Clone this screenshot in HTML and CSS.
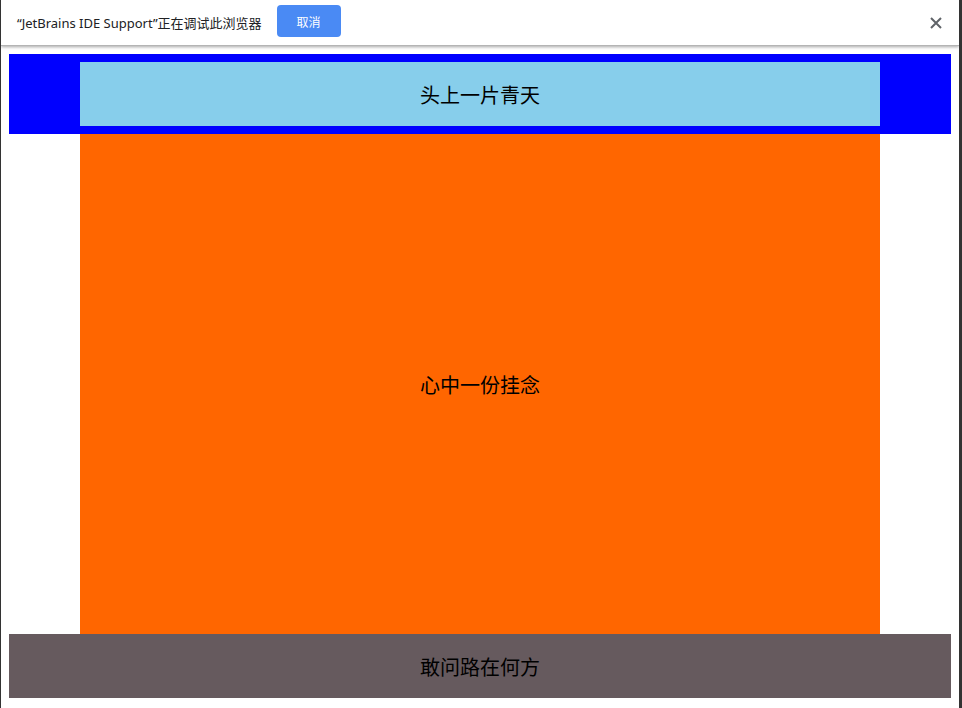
FILE: index.html
```html
<!DOCTYPE html>
<html lang="zh">
<head>
<meta charset="utf-8">
<title>布局</title>
<link rel="stylesheet" href="styles.css">
</head>
<body>
<div class="frame">
  <div class="infobar">
    <span class="info-text">“JetBrains IDE Support”正在调试此浏览器</span>
    <button class="cancel">取消</button>
    <span class="spacer"></span>
    <svg class="close" width="12" height="12" viewBox="0 0 12 12"><path d="M1 1L11 11M11 1L1 11" stroke="#5f6368" stroke-width="2"/></svg>
  </div>
  <div class="viewport">
    <header class="top"><div class="sky">头上一片青天</div></header>
    <main class="middle">心中一份挂念</main>
    <footer class="bottom">敢问路在何方</footer>
  </div>
</div>
</body>
</html>
```
FILE: styles.css
```css
html, body {
  margin: 0;
  padding: 0;
  background: #fff;
}
.frame {
  width: 962px;
  height: 708px;
  box-sizing: border-box;
  border-left: 1px solid #333;
  border-right: 3px solid #333;
  display: flex;
  flex-direction: column;
  overflow: hidden;
}
.infobar {
  height: 45px;
  flex: none;
  display: flex;
  align-items: center;
  padding: 0 17px 0 16px;
  background: #fff;
  border-bottom: 1px solid #b4b4b4;
  box-shadow: 0 1px 3px rgba(0,0,0,0.35);
  position: relative;
  z-index: 2;
  font-family: "Noto Sans", "Noto Sans CJK SC", sans-serif;
  font-size: 13px;
  color: #202124;
}
.info-text {
  white-space: nowrap;
}
.cancel {
  margin-left: 15px;
  margin-bottom: 3px;
  width: 64px;
  height: 32px;
  border: none;
  border-radius: 4px;
  background: #4a8af4;
  color: #fff;
  font-family: "Noto Sans CJK SC", sans-serif;
  font-size: 12px;
  padding: 0;
}
.spacer { flex: 1; }
.close { display: block; }
.viewport {
  flex: 1;
  padding: 8px;
  font-family: "Noto Sans CJK SC", sans-serif;
  font-size: 20px;
  color: #000;
}
.top {
  height: 80px;
  background: #0000ff;
  padding: 8px 0;
  box-sizing: border-box;
}
.sky {
  width: 800px;
  height: 64px;
  margin: 0 auto;
  background: #87ceeb;
  display: flex;
  align-items: center;
  justify-content: center;
}
.middle {
  width: 800px;
  height: 500px;
  margin: 0 auto;
  background: #ff6600;
  display: flex;
  align-items: center;
  justify-content: center;
}
.bottom {
  height: 64px;
  background: #665a5e;
  display: flex;
  align-items: center;
  justify-content: center;
}
```
